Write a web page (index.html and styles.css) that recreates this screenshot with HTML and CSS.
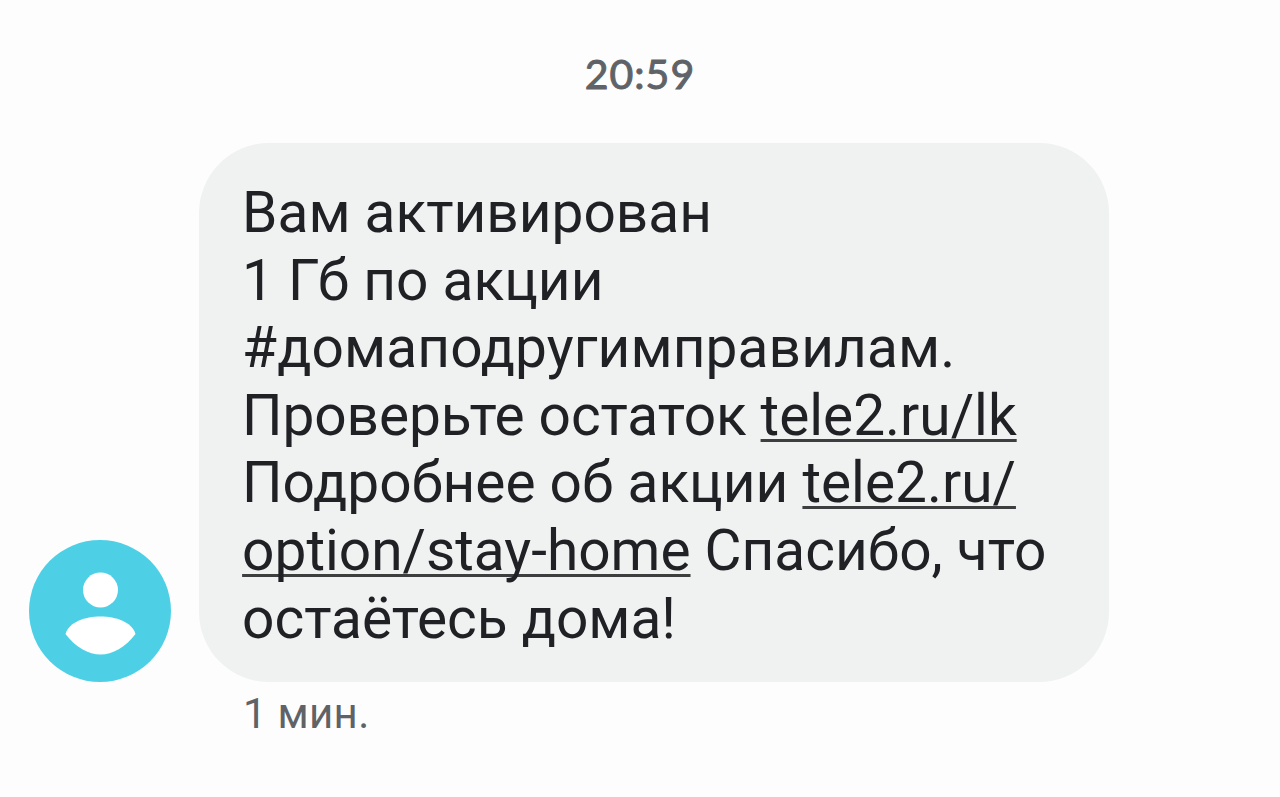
FILE: index.html
```html
<!DOCTYPE html>
<html lang="ru">
  <head>
    <title>Сообщения</title>
    <meta charset="UTF-8">
    <link rel="stylesheet" href="styles.css">
  </head>

  <body>
    <div class="time">20:59</div>
    <div class="message">
      <svg class="avatar" viewBox="0 0 142 142">
        <circle cx="71" cy="71" r="71" fill="#4dd0e6"/>
        <circle cx="71.500" cy="50" r="17.500" fill="#fff"/>
        <path d="M36.500 94C40 82 56 76.500 71.500 76.500S103 82 106.500 94C97 107 83 114.500 71.500 114.500S46 107 36.500 94Z" fill="#fff"/>
      </svg>
      <div class="bubble">
        <span class="line">Вам активирован</span>
        <span class="line">1 Гб по акции</span>
        <span class="line hashtag">#домаподругимправилам.</span>
        <span class="line tight">Проверьте остаток <a href="#">tele2.ru/lk</a></span>
        <span class="line">Подробнее об акции <a href="#">tele2.ru/</a></span>
        <span class="line"><a href="#">option/stay-home</a> Спасибо, что</span>
        <span class="line">остаётесь дома!</span>
      </div>
    </div>
    <div class="status">1 мин.</div>
  </body>
</html>
```
FILE: styles.css
```css
body {
	margin: 0;
	background: #fdfdfd;
	font-family: Roboto, sans-serif;
	overflow: hidden;
}
.time {
	padding-top: 49px;
	height: 93px;
	box-sizing: border-box;
	font: 41px/50px Lato, sans-serif;
	letter-spacing: 1px;
	text-align: center;
	color: #5f6368;
	-webkit-text-stroke: 1px #5f6368;
}
.message {
	display: flex;
	align-items: flex-end;
	gap: 28.600px;
	padding-left: 28.500px;
	padding-top: 50px;
}
.avatar {
	width: 142px;
	height: 142px;
}
.bubble {
	width: 910px;
	height: 539px;
	box-sizing: border-box;
	padding: 36px 43px;
	border-radius: 70px;
	background: #f0f2f2;
	color: #202124;
	font-size: 56.800px;
}
.line {
	display: block;
	line-height: 67.600px;
	white-space: nowrap;
}
.hashtag {letter-spacing: 0.1px;}
.tight {letter-spacing: -0.1px;}
.bubble a {
	color: inherit;
	letter-spacing: 0;
	text-decoration: underline 3px #3c3e40;
	text-decoration-skip-ink: none;
	text-underline-offset: 4px;
}
.status {
	padding: 7px 0 0 243px;
	font-size: 42px;
	line-height: 50px;
	letter-spacing: 0.3px;
	color: #5f6368;
}
```
